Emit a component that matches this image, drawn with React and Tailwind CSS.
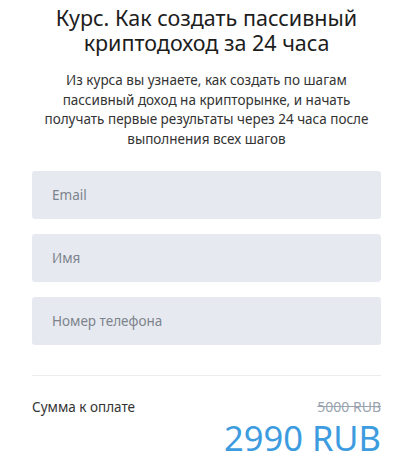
export default function App() {
  const fields = ["Email", "Имя", "Номер телефона"];

  return (
    <div className="min-h-screen bg-white font-['Noto_Sans',sans-serif]">
      <div className="ml-[32px] w-[349px] pt-[5px]">
        <h1 className="text-center text-[21.5px] leading-[25px] text-[#1d1d1d]">
          Курс. Как создать пассивный
          <br />
          криптодоход за 24 часа
        </h1>
        <p className="mx-auto mt-[16px] w-[340px] text-center text-[13.5px] leading-[19.5px] text-[#333]">
          Из курса вы узнаете, как создать по шагам пассивный доход на крипторынке, и начать получать первые результаты через 24 часа после выполнения всех шагов
        </p>

        <form className="mt-[22px] flex flex-col gap-[15px]">
          {fields.map((f) => (
            <input
              key={f}
              type="text"
              placeholder={f}
              className="h-[48px] w-full rounded-[3px] bg-[#e6eaf0] px-[20px] text-[13.5px] text-[#333] outline-none placeholder:text-[#7d838c]"
            />
          ))}
        </form>

        <div className="mt-[30px] border-t border-[#ececec]" />

        <div className="mt-[22px] flex items-start justify-between">
          <span className="text-[13.5px] leading-[18px] text-[#333]">Сумма к оплате</span>
          <div className="flex flex-col items-end">
            <span className="text-[14px] leading-[18px] text-[#9aa3b0] line-through">5000 RUB</span>
            <span className="mt-[4px] text-[34.5px] leading-[36px] text-[#3d9be0]">2990 RUB</span>
          </div>
        </div>
      </div>
    </div>
  );
}
